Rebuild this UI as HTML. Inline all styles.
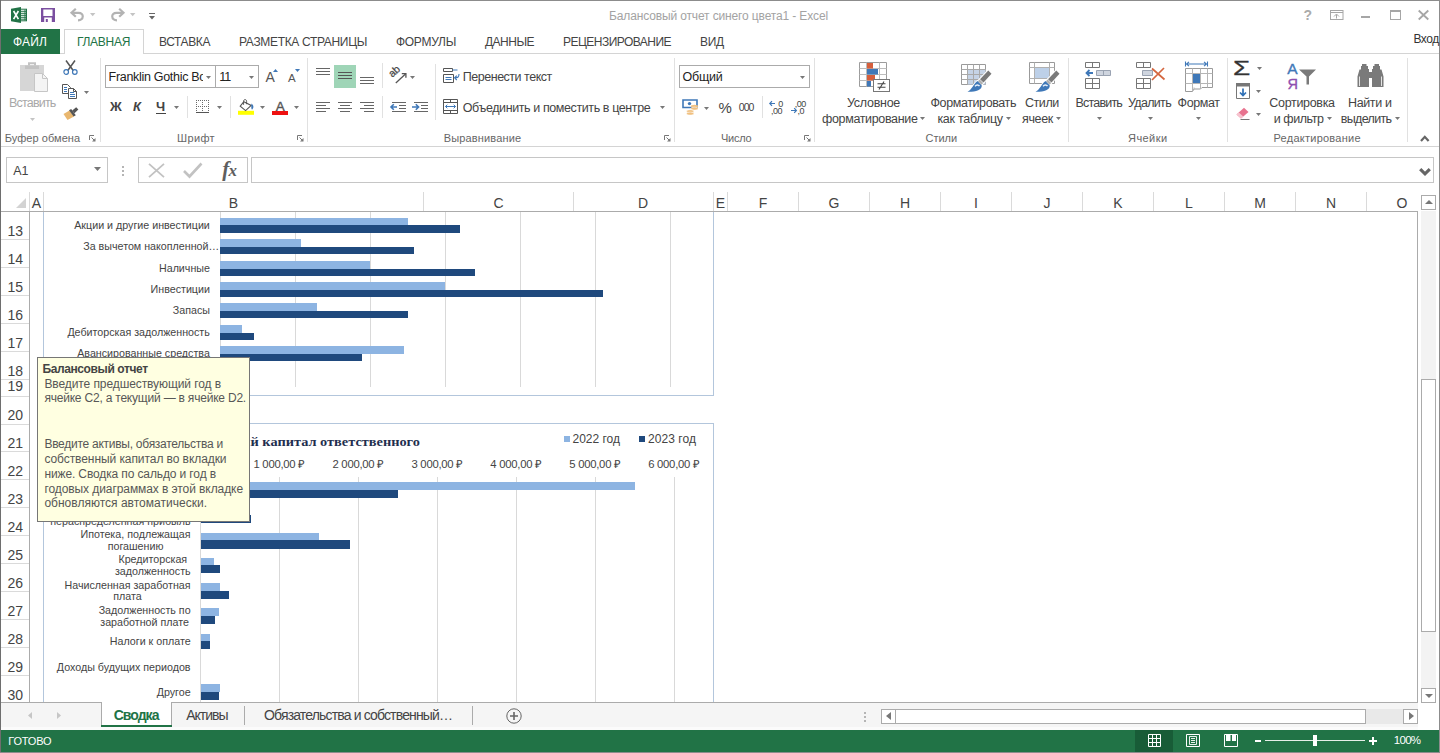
<!DOCTYPE html>
<html lang="ru"><head><meta charset="utf-8"><title>Excel</title>
<style>
*{box-sizing:border-box;margin:0;padding:0}
html,body{width:1440px;height:753px;overflow:hidden;background:#fff}
body{position:relative;font-family:"Liberation Sans",sans-serif;font-size:12px;color:#444}
.a{position:absolute;white-space:nowrap}
svg{position:absolute;overflow:visible}
</style></head><body>
<!-- window frame -->
<div class="a" style="left:0px;top:0px;width:1440px;height:1px;background:#8c8c8c;"></div>
<div class="a" style="left:0px;top:0px;width:1px;height:753px;background:#6e6e6e;"></div>
<div class="a" style="left:1439px;top:0px;width:1px;height:753px;background:#8c8c8c;"></div>
<div class="a" style="left:0px;top:752px;width:1440px;height:1px;background:#8c8c8c;"></div>
<!-- title bar -->
<div class="a" style="left:609.00px;top:7.94px;font-size:12px;line-height:16px;color:#a3a3a3;letter-spacing:-0.137px;">Балансовый отчет синего цвета1 - Excel</div>
<svg style="left:11px;top:7px" width="17" height="16" viewBox="0 0 17 16">
 <rect x="8.5" y="2.2" width="7" height="11.600" fill="#fff" stroke="#217346" stroke-width="1"/>
 <path d="M10 4.300h5M10 6.300h5M10 8.300h5M10 10.300h5M10 12.200h5M14 2.500v11" stroke="#217346" stroke-width="1" fill="none"/>
 <path d="M0 1.8 L10 0 V16 L0 14.2Z" fill="#217346"/>
 <path d="M2.600 4 L7.400 12.200 M7.400 4 L2.600 12.200" stroke="#fff" stroke-width="1.600" fill="none"/>
</svg>
<svg style="left:41px;top:8px" width="14" height="14" viewBox="0 0 14 14">
 <path d="M0 0H14V14H0Z" fill="#7b4fa0"/>
 <rect x="2.300" y="1.500" width="9.200" height="6.500" fill="#fff"/>
 <rect x="3.200" y="9.500" width="7.600" height="4.5" fill="#fff"/>
 <rect x="4.800" y="11" width="2" height="3" fill="#7b4fa0"/>
</svg>
<svg style="left:70px;top:8px" width="15" height="14" viewBox="0 0 15 14">
 <path d="M5.800 0.800 L1.500 4.800 L5.800 8.800" fill="none" stroke="#b3b3b3" stroke-width="2.200"/>
 <path d="M2 4.800 H8.500 C14.500 4.800 14 12.300 8 12.300" fill="none" stroke="#b3b3b3" stroke-width="2.200"/>
</svg>
<svg style="left:110px;top:8px" width="15" height="14" viewBox="0 0 15 14">
 <path d="M9.200 0.800 L13.500 4.800 L9.200 8.800" fill="none" stroke="#b3b3b3" stroke-width="2.200"/>
 <path d="M13 4.800 H6.500 C0.500 4.800 1 12.300 7 12.300" fill="none" stroke="#b3b3b3" stroke-width="2.200"/>
</svg>
<svg style="left:89.8px;top:12.8px" width="5.4" height="3.2"><path d="M0 0H5.4L2.7 3.2Z" fill="#c4c4c4"/></svg>
<svg style="left:129.6px;top:12.8px" width="5.4" height="3.2"><path d="M0 0H5.4L2.7 3.2Z" fill="#c4c4c4"/></svg>
<div class="a" style="left:148.5px;top:13px;width:6px;height:1px;background:#666;"></div>
<svg style="left:148.5px;top:16px" width="6" height="3.5"><path d="M0 0H6L3 3.5Z" fill="#666"/></svg>
<div class="a" style="left:1303.60px;top:6.15px;font-size:14px;line-height:18px;color:#ababab;font-weight:bold;">?</div>
<svg style="left:1330px;top:10px" width="14" height="10" viewBox="0 0 14 10">
 <rect x="0.5" y="0.5" width="12.500" height="9" fill="none" stroke="#a6a6a6"/>
 <path d="M0.5 2.5H13M6.500 8.500V4.5M4 6.5L6.500 4L9 6.5" fill="none" stroke="#a6a6a6"/>
</svg>
<svg style="left:1418px;top:10px" width="11" height="10" viewBox="0 0 11 10">
 <path d="M0.7 0.5L10.3 9.5M10.3 0.5L0.7 9.5" stroke="#a6a6a6" stroke-width="1.8" fill="none"/>
</svg>
<div class="a" style="left:1361px;top:16px;width:9px;height:2px;background:#a6a6a6;"></div>
<div class="a" style="left:1390px;top:10px;width:10.5px;height:10px;border:1px solid #a6a6a6;border-top-width:2px;"></div>
<!-- ribbon tabs -->
<div class="a" style="left:1px;top:53px;width:1438px;height:1px;background:#d4d4d4;"></div>
<div class="a" style="left:1px;top:29px;width:59px;height:25px;background:#217346;"></div>
<div class="a" style="left:64px;top:29px;width:80px;height:25px;background:#fff;border:1px solid #d4d4d4;border-bottom:none;"></div>
<div class="a" style="left:13.00px;top:33.74px;font-size:12px;line-height:16px;color:#fff;letter-spacing:0.159px;">ФАЙЛ</div>
<div class="a" style="left:77.00px;top:33.74px;font-size:12px;line-height:16px;color:#217346;letter-spacing:-0.292px;">ГЛАВНАЯ</div>
<div class="a" style="left:159.00px;top:33.74px;font-size:12px;line-height:16px;color:#444;letter-spacing:-0.401px;">ВСТАВКА</div>
<div class="a" style="left:239.00px;top:33.74px;font-size:12px;line-height:16px;color:#444;letter-spacing:-0.328px;">РАЗМЕТКА СТРАНИЦЫ</div>
<div class="a" style="left:396.00px;top:33.74px;font-size:12px;line-height:16px;color:#444;letter-spacing:-0.292px;">ФОРМУЛЫ</div>
<div class="a" style="left:485.00px;top:33.74px;font-size:12px;line-height:16px;color:#444;letter-spacing:-0.515px;">ДАННЫЕ</div>
<div class="a" style="left:563.00px;top:33.74px;font-size:12px;line-height:16px;color:#444;letter-spacing:-0.529px;">РЕЦЕНЗИРОВАНИЕ</div>
<div class="a" style="left:700.00px;top:33.74px;font-size:12px;line-height:16px;color:#444;letter-spacing:-0.252px;">ВИД</div>
<div class="a" style="left:1413.40px;top:30.64px;font-size:12px;line-height:16px;color:#333;letter-spacing:-0.412px;">Вход</div>
<!-- ribbon -->
<div class="a" style="left:1px;top:146px;width:1438px;height:1px;background:#d4d4d4;"></div>
<div class="a" style="left:100px;top:58px;width:1px;height:84px;background:#e1e1e1;"></div>
<div class="a" style="left:307px;top:58px;width:1px;height:84px;background:#e1e1e1;"></div>
<div class="a" style="left:674px;top:58px;width:1px;height:84px;background:#e1e1e1;"></div>
<div class="a" style="left:814px;top:58px;width:1px;height:84px;background:#e1e1e1;"></div>
<div class="a" style="left:1068px;top:58px;width:1px;height:84px;background:#e1e1e1;"></div>
<div class="a" style="left:1227px;top:58px;width:1px;height:84px;background:#e1e1e1;"></div>
<div class="a" style="left:1407px;top:58px;width:1px;height:84px;background:#e1e1e1;"></div>
<div class="a" style="left:4.70px;top:130.59px;font-size:11px;line-height:14px;color:#666;letter-spacing:0.063px;">Буфер обмена</div>
<div class="a" style="left:177.00px;top:130.59px;font-size:11px;line-height:14px;color:#666;letter-spacing:0.362px;">Шрифт</div>
<div class="a" style="left:443.70px;top:130.59px;font-size:11px;line-height:14px;color:#666;letter-spacing:0.157px;">Выравнивание</div>
<div class="a" style="left:721.00px;top:130.59px;font-size:11px;line-height:14px;color:#666;letter-spacing:-0.227px;">Число</div>
<div class="a" style="left:925.50px;top:130.59px;font-size:11px;line-height:14px;color:#666;letter-spacing:-0.038px;">Стили</div>
<div class="a" style="left:1128.00px;top:130.59px;font-size:11px;line-height:14px;color:#666;letter-spacing:0.434px;">Ячейки</div>
<div class="a" style="left:1273.50px;top:130.59px;font-size:11px;line-height:14px;color:#666;letter-spacing:0.250px;">Редактирование</div>
<svg style="left:89px;top:135px" width="7" height="7" viewBox="0 0 7 7"><path d="M0.5 5V0.5H5" fill="none" stroke="#777"/><path d="M2.5 2.5L5.5 5.5" stroke="#777" fill="none"/><path d="M6.5 3V6.5H3Z" fill="#777"/></svg>
<svg style="left:296.5px;top:135px" width="7" height="7" viewBox="0 0 7 7"><path d="M0.5 5V0.5H5" fill="none" stroke="#777"/><path d="M2.5 2.5L5.5 5.5" stroke="#777" fill="none"/><path d="M6.5 3V6.5H3Z" fill="#777"/></svg>
<svg style="left:663.5px;top:135px" width="7" height="7" viewBox="0 0 7 7"><path d="M0.5 5V0.5H5" fill="none" stroke="#777"/><path d="M2.5 2.5L5.5 5.5" stroke="#777" fill="none"/><path d="M6.5 3V6.5H3Z" fill="#777"/></svg>
<svg style="left:803.5px;top:135px" width="7" height="7" viewBox="0 0 7 7"><path d="M0.5 5V0.5H5" fill="none" stroke="#777"/><path d="M2.5 2.5L5.5 5.5" stroke="#777" fill="none"/><path d="M6.5 3V6.5H3Z" fill="#777"/></svg>
<svg style="left:1419.500px;top:134.500px" width="10" height="7" viewBox="0 0 10 7"><path d="M1 6L4.800 1.800L8.600 6" fill="none" stroke="#666" stroke-width="2.200"/></svg>
<svg style="left:20px;top:62px" width="28" height="30" viewBox="0 0 28 30">
 <path d="M0 3H24V29H0Z" fill="#d6d6d6"/>
 <path d="M5 3.5 H19 V7 H5Z" fill="#c3c3c3"/>
 <path d="M9 3.5 V1.2 H15 V3.5" fill="none" stroke="#c3c3c3" stroke-width="2"/>
 <path d="M14.5 11.5 H22.5 L27.5 16.5 V29.5 H14.5Z" fill="#f4f4f4" stroke="#c6c6c6"/>
 <path d="M22.5 11.5 V16.5 H27.5" fill="none" stroke="#c6c6c6"/>
</svg>
<div class="a" style="left:9.00px;top:95.27px;font-size:12.5px;line-height:16px;color:#a8a8a8;letter-spacing:-0.811px;">Вставить</div>
<svg style="left:30.3px;top:117.6px" width="5" height="3"><path d="M0 0H5L2.5 3Z" fill="#c4c4c4"/></svg>
<svg style="left:63px;top:60px" width="15" height="15" viewBox="0 0 15 15">
 <path d="M3 0.5 L10.2 10.5 M12 0.5 L4.8 10.5" stroke="#555" stroke-width="1.5" fill="none"/>
 <circle cx="3.2" cy="12" r="2.3" fill="none" stroke="#3f78b8" stroke-width="1.2"/>
 <circle cx="11.8" cy="12" r="2.3" fill="none" stroke="#3f78b8" stroke-width="1.2"/>
</svg>
<svg style="left:62px;top:84px" width="16" height="15" viewBox="0 0 16 15">
 <path d="M0.5 0.5 H5.5 L8.5 3.5 V9.5 H0.5Z" fill="#fff" stroke="#555"/>
 <path d="M2 3.5H5M2 5.5H5M2 7.5H5" stroke="#3f78b8" fill="none"/>
 <path d="M6.5 4.5 H11.5 L14.5 7.5 V14.5 H6.5Z" fill="#fff" stroke="#555"/>
 <path d="M11.5 4.5V7.5H14.5" fill="none" stroke="#555"/>
 <path d="M8 8.5H12M8 10.5H13M8 12.5H13" stroke="#3f78b8" fill="none"/>
</svg>
<svg style="left:84px;top:90.5px" width="5" height="3"><path d="M0 0H5L2.5 3Z" fill="#777"/></svg>
<svg style="left:63px;top:106px" width="16" height="15" viewBox="0 0 16 15">
 <path d="M0.5 8 L6.5 4.5 L11 10.5 L4.5 14 Z" fill="#e9b76f"/>
 <path d="M6 4.3 L8.2 3 L12.8 9.2 L10.6 10.6Z" fill="#555"/>
 <path d="M9.2 4.6 L13.2 1.2 L15.4 3.6 L11.4 7.2Z" fill="#555"/>
</svg>
<div class="a" style="left:105px;top:65px;width:111px;height:23px;background:#fff;border:1px solid #ababab;"></div>
<div class="a" style="left:215px;top:65px;width:44px;height:23px;background:#fff;border:1px solid #ababab;"></div>
<div class="a" style="left:108.60px;top:68.57px;font-size:12.5px;line-height:16px;color:#222;letter-spacing:-0.303px;width:94.3px;overflow:hidden;">Franklin Gothic Bo</div>
<svg style="left:206px;top:75.5px" width="5" height="3"><path d="M0 0H5L2.5 3Z" fill="#777"/></svg>
<div class="a" style="left:219.20px;top:68.57px;font-size:12.5px;line-height:16px;color:#222;letter-spacing:-0.988px;">11</div>
<svg style="left:249px;top:75.5px" width="5" height="3"><path d="M0 0H5L2.5 3Z" fill="#777"/></svg>
<div class="a" style="left:265.50px;top:68.35px;font-size:14px;line-height:18px;color:#555;">A</div>
<div class="a" style="left:288.00px;top:70.72px;font-size:11.5px;line-height:15px;color:#555;">A</div>
<svg style="left:273px;top:69px" width="5" height="3"><path d="M0 3H5L2.5 0Z" fill="#3f78b8"/></svg>
<svg style="left:295px;top:69px" width="5" height="3"><path d="M0 0H5L2.5 3Z" fill="#3f78b8"/></svg>
<div class="a" style="left:110.00px;top:98.20px;font-size:13px;line-height:17px;color:#444;font-weight:bold;">Ж</div>
<div class="a" style="left:133.00px;top:98.20px;font-size:13px;line-height:17px;color:#444;font-weight:bold;font-style:italic;">К</div>
<div class="a" style="left:156.00px;top:98.20px;font-size:13px;line-height:17px;color:#444;font-weight:bold;">Ч</div>
<div class="a" style="left:155.5px;top:112.5px;width:10px;height:1px;background:#444;"></div>
<svg style="left:173.8px;top:105.8px" width="5" height="3"><path d="M0 0H5L2.5 3Z" fill="#777"/></svg>
<div class="a" style="left:187px;top:96px;width:1px;height:22px;background:#e1e1e1;"></div>
<div class="a" style="left:230px;top:96px;width:1px;height:22px;background:#e1e1e1;"></div>
<svg style="left:196px;top:100px" width="13" height="13" viewBox="0 0 13 13" shape-rendering="crispEdges">
 <path d="M0 0h1v1h-1zM0 2h1v1h-1zM0 4h1v1h-1zM0 6h1v1h-1zM0 8h1v1h-1zM0 10h1v1h-1zM2 0h1v1h-1zM2 6h1v1h-1zM4 0h1v1h-1zM4 6h1v1h-1zM6 0h1v1h-1zM6 2h1v1h-1zM6 4h1v1h-1zM6 6h1v1h-1zM6 8h1v1h-1zM6 10h1v1h-1zM8 0h1v1h-1zM8 6h1v1h-1zM10 0h1v1h-1zM10 6h1v1h-1zM12 0h1v1h-1zM12 2h1v1h-1zM12 4h1v1h-1zM12 6h1v1h-1zM12 8h1v1h-1zM12 10h1v1h-1z" fill="#6a6a6a"/>
 <path d="M0 12h13v1h-13z" fill="#555"/>
</svg>
<svg style="left:217px;top:105.8px" width="5" height="3"><path d="M0 0H5L2.5 3Z" fill="#777"/></svg>
<svg style="left:238px;top:99px" width="16" height="16" viewBox="0 0 16 16">
 <rect x="0" y="11.800" width="16" height="4" fill="#ffff00"/>
 <path d="M5.800 2.800 L13.200 6.500 L7.600 11.600 L2.200 7.200Z" fill="#fff" stroke="#555" stroke-width="1.100"/>
 <path d="M5.600 5.800 V2.300 C5.600 0 8.600 0 8.600 2.300 V5.200" fill="none" stroke="#555" stroke-width="1"/>
 <path d="M13.400 4.600 C16 6.500 16 9 14 10.800 C12.800 9.200 13.400 7 13.400 4.600Z" fill="#3f78b8"/>
</svg>
<svg style="left:260px;top:105.8px" width="5" height="3"><path d="M0 0H5L2.5 3Z" fill="#777"/></svg>
<div class="a" style="left:275.80px;top:97.92px;font-size:13.5px;line-height:18px;color:#555;-webkit-text-stroke:0.35px #555;">A</div>
<div class="a" style="left:272px;top:111px;width:16px;height:4px;background:#ee1111;"></div>
<svg style="left:293.8px;top:105.8px" width="5" height="3"><path d="M0 0H5L2.5 3Z" fill="#777"/></svg>
<div class="a" style="left:316px;top:68px;width:14px;height:1px;background:#666;"></div>
<div class="a" style="left:316px;top:71px;width:14px;height:1px;background:#666;"></div>
<div class="a" style="left:316px;top:74px;width:14px;height:1px;background:#666;"></div>
<div class="a" style="left:334px;top:65px;width:22px;height:23px;background:#9fd5b7;"></div>
<div class="a" style="left:338px;top:72px;width:14px;height:1px;background:#555;"></div>
<div class="a" style="left:338px;top:75px;width:14px;height:1px;background:#555;"></div>
<div class="a" style="left:338px;top:78px;width:14px;height:1px;background:#555;"></div>
<div class="a" style="left:360px;top:77px;width:14px;height:1px;background:#666;"></div>
<div class="a" style="left:360px;top:80px;width:14px;height:1px;background:#666;"></div>
<div class="a" style="left:360px;top:83px;width:14px;height:1px;background:#666;"></div>
<div class="a" style="left:316px;top:102px;width:14px;height:1px;background:#666;"></div>
<div class="a" style="left:338px;top:102px;width:14px;height:1px;background:#666;"></div>
<div class="a" style="left:360px;top:102px;width:14px;height:1px;background:#666;"></div>
<div class="a" style="left:316px;top:105px;width:10px;height:1px;background:#666;"></div>
<div class="a" style="left:340px;top:105px;width:10px;height:1px;background:#666;"></div>
<div class="a" style="left:364px;top:105px;width:10px;height:1px;background:#666;"></div>
<div class="a" style="left:316px;top:108px;width:14px;height:1px;background:#666;"></div>
<div class="a" style="left:338px;top:108px;width:14px;height:1px;background:#666;"></div>
<div class="a" style="left:360px;top:108px;width:14px;height:1px;background:#666;"></div>
<div class="a" style="left:316px;top:111px;width:10px;height:1px;background:#666;"></div>
<div class="a" style="left:340px;top:111px;width:10px;height:1px;background:#666;"></div>
<div class="a" style="left:364px;top:111px;width:10px;height:1px;background:#666;"></div>
<div class="a" style="left:382px;top:63px;width:1px;height:25px;background:#e1e1e1;"></div>
<div class="a" style="left:382px;top:96px;width:1px;height:22px;background:#e1e1e1;"></div>
<div class="a" style="left:435px;top:64px;width:1px;height:56px;background:#e1e1e1;"></div>
<svg style="left:389px;top:66px" width="19" height="19" viewBox="0 0 19 19">
 <text x="0" y="0" transform="translate(3.200,11.800) rotate(-42)" font-family="Liberation Sans, sans-serif" font-size="10.500" fill="#4a4a4a" stroke="#4a4a4a" stroke-width=".25">ab</text>
 <path d="M6.800 17 L16.500 8" stroke="#555" stroke-width="1.300" fill="none"/>
 <path d="M12.800 7.600 H16.900 V11.700" stroke="#555" stroke-width="1.300" fill="none"/>
</svg>
<svg style="left:410px;top:76px" width="5" height="3"><path d="M0 0H5L2.5 3Z" fill="#777"/></svg>
<svg style="left:390px;top:101px" width="17" height="12" viewBox="0 0 17 12"><path d="M2 1.5H16M9 4.5H16M9 7.5H16M2 10.5H16" stroke="#666" fill="none"/><path d="M1 6H7M3.8 3.2L1 6L3.8 8.8" stroke="#3f78b8" stroke-width="1.6" fill="none"/></svg>
<svg style="left:412px;top:101px" width="17" height="12" viewBox="0 0 17 12"><path d="M2 1.5H16M9 4.5H16M9 7.5H16M2 10.5H16" stroke="#666" fill="none"/><path d="M0 6H6M3.8 3.2L6.6 6L3.8 8.8" stroke="#3f78b8" stroke-width="1.6" fill="none"/></svg>
<svg style="left:443px;top:68px" width="17" height="15" viewBox="0 0 17 15">
 <path d="M0.5 0.5H9.500V3.5H0.5Z" fill="#fff" stroke="#555"/>
 <path d="M9.500 2H14.500" stroke="#3f78b8" fill="none"/>
 <path d="M0.5 6.5H10.500V14.5H0.5Z" fill="#fff" stroke="#555"/>
 <path d="M2.500 9.5H8.500M2.500 11.5H8.500" stroke="#3f78b8" fill="none"/>
 <path d="M16 6C16 9.500 14.500 9.800 11.800 9.800M13.800 7.600L11.600 9.800L13.800 12" stroke="#3f78b8" stroke-width="1.1" fill="none"/>
</svg>
<div class="a" style="left:462.80px;top:68.67px;font-size:12.5px;line-height:16px;color:#444;letter-spacing:-0.483px;">Перенести текст</div>
<svg style="left:443px;top:99px" width="16" height="15" viewBox="0 0 16 15">
 <path d="M0.5 0.5H14.5V14.5H0.5Z" fill="#fff" stroke="#555"/>
 <path d="M0.5 3.5H14.5M0.5 11.5H14.5M7.5 0.5V3.5M7.5 11.5V14.5" stroke="#555" fill="none"/>
 <path d="M2.5 7.5H12.5M4.3 5.7L2.5 7.5L4.3 9.3M10.7 5.7L12.5 7.5L10.7 9.3" stroke="#3f78b8" fill="none"/>
</svg>
<div class="a" style="left:462.80px;top:99.87px;font-size:12.5px;line-height:16px;color:#444;letter-spacing:-0.398px;">Объединить и поместить в центре</div>
<svg style="left:660px;top:106px" width="5" height="3"><path d="M0 0H5L2.5 3Z" fill="#777"/></svg>
<div class="a" style="left:679px;top:65px;width:131px;height:23px;background:#fff;border:1px solid #ababab;"></div>
<div class="a" style="left:682.60px;top:69.17px;font-size:12.5px;line-height:16px;color:#222;letter-spacing:-0.226px;">Общий</div>
<svg style="left:800px;top:75.5px" width="5" height="3"><path d="M0 0H5L2.5 3Z" fill="#777"/></svg>
<svg style="left:682px;top:99px" width="17" height="17" viewBox="0 0 17 17">
 <path d="M1 1H15V8.5H1Z" fill="#fff" stroke="#3f78b8" stroke-width="1.6"/>
 <circle cx="7.5" cy="4.6" r="1.7" fill="#3f78b8"/>
 <ellipse cx="12.5" cy="7.2" rx="3.6" ry="1.5" fill="#f0c080"/>
 <ellipse cx="12.5" cy="9.6" rx="3.6" ry="1.5" fill="#f0c080" stroke="#fff" stroke-width=".5"/>
 <ellipse cx="8.2" cy="12.2" rx="3.6" ry="1.5" fill="#f0c080" stroke="#fff" stroke-width=".5"/>
 <ellipse cx="8.2" cy="14.6" rx="3.6" ry="1.5" fill="#f0c080" stroke="#fff" stroke-width=".5"/>
</svg>
<svg style="left:704px;top:106.5px" width="5" height="3"><path d="M0 0H5L2.5 3Z" fill="#777"/></svg>
<div class="a" style="left:718.50px;top:98.00px;font-size:15px;line-height:20px;color:#444;">%</div>
<div class="a" style="left:738.80px;top:99.86px;font-size:10.5px;line-height:14px;color:#444;letter-spacing:-1.006px;">000</div>
<div class="a" style="left:762px;top:96px;width:1px;height:22px;background:#e1e1e1;"></div>
<svg style="left:769px;top:100px" width="15" height="15" viewBox="0 0 15 15">
 <path d="M0.8 3.5H6M3 1.2L0.8 3.5L3 5.8" stroke="#3f78b8" stroke-width="1.2" fill="none"/>
 <text x="9.300" y="6.800" font-family="Liberation Sans, sans-serif" font-size="9" fill="#444">0</text>
 <text x="2" y="14" font-family="Liberation Sans, sans-serif" font-size="9" fill="#444" letter-spacing="-0.500">,00</text>
</svg>
<svg style="left:791px;top:100px" width="15" height="15" viewBox="0 0 15 15">
 <text x="3.800" y="6.800" font-family="Liberation Sans, sans-serif" font-size="9" fill="#444" letter-spacing="-0.500">,00</text>
 <path d="M0 10.5H5.4M3.2 8.2L5.4 10.5L3.2 12.8" stroke="#3f78b8" stroke-width="1.2" fill="none"/>
 <text x="6.600" y="14" font-family="Liberation Sans, sans-serif" font-size="9" fill="#444" letter-spacing="-0.500">,0</text>
</svg>
<svg style="left:859px;top:62px" width="31" height="30" viewBox="0 0 31 30">
 <path d="M0.5 0.5H27.5V24.5H0.5Z" fill="#fff" stroke="#9c9c9c"/>
 <path d="M0.5 6.5H27.5M0.5 12.5H27.5M0.5 18.5H27.5M7.5 0.5V24.5M20.5 0.5V24.5" stroke="#bdbdbd" fill="none"/>
 <rect x="8" y="1" width="6" height="5.5" fill="#d65f3c"/>
 <rect x="8" y="7" width="11" height="5.5" fill="#3f78b8"/>
 <rect x="8" y="13" width="8" height="5.5" fill="#d65f3c"/>
 <rect x="8" y="19" width="4" height="5.5" fill="#3f78b8"/>
 <rect x="14.5" y="17.500" width="16" height="12" fill="#fff" stroke="#777"/>
 <path d="M18.5 21.8H26.5M18.5 25.2H26.5M25 19.5L20 27.5" stroke="#444" stroke-width="1.1" fill="none"/>
</svg>
<div class="a" style="left:847.00px;top:94.67px;font-size:12.5px;line-height:16px;color:#444;letter-spacing:-0.274px;">Условное</div>
<div class="a" style="left:822.00px;top:110.57px;font-size:12.5px;line-height:16px;color:#444;letter-spacing:-0.347px;">форматирование</div>
<svg style="left:919.7px;top:117px" width="5" height="3"><path d="M0 0H5L2.5 3Z" fill="#777"/></svg>
<svg style="left:961px;top:64px" width="31" height="28" viewBox="0 0 31 28">
 <path d="M0.5 0.5H24.5V20.500H0.5Z" fill="#fff" stroke="#9a9a9a"/>
 <rect x="6.5" y="5.5" width="18" height="15" fill="#c5d3e6"/>
 <path d="M0.5 5.5H24.5M0.5 10.5H24.5M0.5 15.5H24.5M6.5 0.5V20.500M12.5 0.5V20.500M18.5 0.5V20.500" stroke="#a9a9a9" fill="none"/>
 <g transform="translate(5.5,7)">
 <g stroke="#fff" stroke-width="2" stroke-linejoin="round"><path d="M21.800 -0.500 L25 2.700 L17 11.500 L13.500 8.200Z" fill="#7a7a7a"/>
 <path d="M13.200 8.500 L16.700 12 L15 13.800 L11.400 10.200Z" fill="#b0b0b0"/>
 <path d="M11 10 L15.200 14.200 C16 18.800 9 21 1 20.800 C6 18 6.500 13.500 11 10Z" fill="#3f78b8"/></g>
 <path d="M21.800 -0.500 L25 2.700 L17 11.500 L13.500 8.200Z" fill="#7a7a7a"/>
 <path d="M13.200 8.500 L16.700 12 L15 13.800 L11.400 10.200Z" fill="#b0b0b0"/>
 <path d="M11 10 L15.200 14.200 C16 18.800 9 21 1 20.800 C6 18 6.500 13.500 11 10Z" fill="#3f78b8"/>
 <path d="M8.600 15.400 C9.600 13.600 12 13.600 13 15.200" stroke="#e8f0fa" stroke-width="1.500" fill="none"/>
</g>
</svg>
<div class="a" style="left:930.50px;top:94.67px;font-size:12.5px;line-height:16px;color:#444;letter-spacing:-0.400px;">Форматировать</div>
<div class="a" style="left:937.40px;top:110.57px;font-size:12.5px;line-height:16px;color:#444;letter-spacing:-0.278px;">как таблицу</div>
<svg style="left:1006px;top:117px" width="5" height="3"><path d="M0 0H5L2.5 3Z" fill="#777"/></svg>
<svg style="left:1029px;top:62px" width="31" height="30" viewBox="0 0 31 30">
 <path d="M0.5 0.5H25.500V21.5H0.5Z" fill="#fff" stroke="#9a9a9a"/>
 <path d="M0.5 5.5H25.500M0.5 16.5H25.500M5.5 0.5V21.5M20.500 0.5V21.5" stroke="#b0b0b0" fill="none"/>
 <rect x="6" y="6" width="14" height="10" fill="#bdd0e8"/>
 <g transform="translate(5.5,9)">
 <g stroke="#fff" stroke-width="2" stroke-linejoin="round"><path d="M21.800 -0.500 L25 2.700 L17 11.500 L13.500 8.200Z" fill="#7a7a7a"/>
 <path d="M13.200 8.500 L16.700 12 L15 13.800 L11.400 10.200Z" fill="#b0b0b0"/>
 <path d="M11 10 L15.200 14.200 C16 18.800 9 21 1 20.800 C6 18 6.500 13.500 11 10Z" fill="#3f78b8"/></g>
 <path d="M21.800 -0.500 L25 2.700 L17 11.500 L13.500 8.200Z" fill="#7a7a7a"/>
 <path d="M13.200 8.500 L16.700 12 L15 13.800 L11.400 10.200Z" fill="#b0b0b0"/>
 <path d="M11 10 L15.200 14.200 C16 18.800 9 21 1 20.800 C6 18 6.500 13.500 11 10Z" fill="#3f78b8"/>
 <path d="M8.600 15.400 C9.600 13.600 12 13.600 13 15.200" stroke="#e8f0fa" stroke-width="1.500" fill="none"/>
</g>
</svg>
<div class="a" style="left:1025.00px;top:94.67px;font-size:12.5px;line-height:16px;color:#444;letter-spacing:-0.442px;">Стили</div>
<div class="a" style="left:1022.00px;top:110.57px;font-size:12.5px;line-height:16px;color:#444;letter-spacing:-0.331px;">ячеек</div>
<svg style="left:1056px;top:117px" width="5" height="3"><path d="M0 0H5L2.5 3Z" fill="#777"/></svg>
<svg style="left:1085px;top:62px" width="28" height="27" viewBox="0 0 28 27">
 <path d="M0.5 0.5H14.5V5.5H0.5ZM7.5 0.5V5.5" fill="#fff" stroke="#777"/>
 <path d="M11.5 8.5H25.500V13.5H11.5Z" fill="#cfd5df" stroke="#9aa3b2"/><path d="M18.5 8.5V13.5" stroke="#9aa3b2"/>
 <path d="M0.5 16.5H14.5V26.500H0.5ZM7.5 16.5V26.500M0.5 21.5H14.5" fill="#fff" stroke="#777"/>
 <path d="M1.5 11H8M4.5 8L1.5 11L4.500 14" stroke="#3f78b8" stroke-width="1.8" fill="none"/>
</svg>
<div class="a" style="left:1075.60px;top:95.07px;font-size:12.5px;line-height:16px;color:#444;letter-spacing:-0.823px;">Вставить</div>
<svg style="left:1097px;top:117px" width="5" height="3"><path d="M0 0H5L2.5 3Z" fill="#777"/></svg>
<svg style="left:1136px;top:62px" width="30" height="27" viewBox="0 0 30 27">
 <path d="M0.5 0.5H14.5V5.5H0.5ZM7.5 0.5V5.5" fill="#fff" stroke="#777"/>
 <path d="M6.5 8.5H16.5V13.5H6.5Z" fill="#cfd5df" stroke="#9aa3b2"/>
 <path d="M0.5 16.5H14.5V26.500H0.5ZM7.5 16.5V26.500M0.5 21.5H14.5" fill="#fff" stroke="#777"/>
 <path d="M16 6.500L28.5 17.500M28 6L16 18" stroke="#d4663f" stroke-width="1.7" fill="none"/>
</svg>
<div class="a" style="left:1128.00px;top:95.07px;font-size:12.5px;line-height:16px;color:#444;letter-spacing:-0.675px;">Удалить</div>
<svg style="left:1148px;top:117px" width="5" height="3"><path d="M0 0H5L2.5 3Z" fill="#777"/></svg>
<svg style="left:1185px;top:61px" width="28" height="31" viewBox="0 0 28 31">
 <path d="M0.5 0.5V5.500M22.5 0.5V5.500M1.5 3H21.5M4 0.8L1.5 3L4 5.200M19 0.8L21.5 3L19 5.200" stroke="#3f78b8" stroke-width="1.1" fill="none"/>
 <path d="M0.5 7.5H27.500V26.500H17L15.500 28H9L7.500 30.500H0.5Z" fill="#fff" stroke="#9a9a9a"/>
 <path d="M0.5 12.500H27.500M0.5 22.500H27.500M7.5 7.5V30M15.500 7.5V28M22.500 7.5V26.500M9 28V26.500" stroke="#b5b5b5" fill="none"/>
 <rect x="8" y="13" width="7" height="9" fill="#3f78b8"/>
</svg>
<div class="a" style="left:1177.50px;top:95.07px;font-size:12.5px;line-height:16px;color:#444;letter-spacing:-0.367px;">Формат</div>
<svg style="left:1196px;top:117px" width="5" height="3"><path d="M0 0H5L2.5 3Z" fill="#777"/></svg>
<div class="a" style="left:1233.40px;top:54.40px;font-size:20.5px;line-height:27px;color:#333;transform:scaleX(1.36);transform-origin:0 0;-webkit-text-stroke:0.3px #333;">Σ</div>
<svg style="left:1256.8px;top:67px" width="5" height="3"><path d="M0 0H5L2.5 3Z" fill="#777"/></svg>
<svg style="left:1236px;top:83px" width="14" height="16" viewBox="0 0 14 16">
 <path d="M0.5 0.5H13.5V15.500H0.5Z" fill="#fff" stroke="#777"/>
 <rect x="0" y="0" width="14" height="3.500" fill="#777"/>
 <path d="M7 5.500V12.500M4 9.500L7 12.500L10 9.500" stroke="#2e6fb5" stroke-width="1.7" fill="none"/>
</svg>
<svg style="left:1255.5px;top:90px" width="5" height="3"><path d="M0 0H5L2.5 3Z" fill="#777"/></svg>
<svg style="left:1236px;top:107px" width="14" height="13" viewBox="0 0 14 13">
 <path d="M0.5 7.500L8 0.8L12.500 5L5 11.500Z" fill="#e8738f"/>
 <path d="M0.5 7.500L2.800 5.500L7.300 9.600L5 11.500Z" fill="#f6c4cf"/>
 <path d="M4.500 12.500H13.500" stroke="#777" fill="none"/>
</svg>
<svg style="left:1255.5px;top:112.8px" width="5" height="3"><path d="M0 0H5L2.5 3Z" fill="#777"/></svg>
<svg style="left:1287px;top:62px" width="30" height="28" viewBox="0 0 30 28">
 <text x="0.200" y="12.200" font-family="Liberation Sans, sans-serif" font-size="15.500" fill="#3f78b8" stroke="#3f78b8" stroke-width=".35">A</text>
 <text x="0.5" y="26.500" font-family="Liberation Sans, sans-serif" font-size="14.500" fill="#8e4fb0" stroke="#8e4fb0" stroke-width=".35">Я</text>
 <path d="M12 7.500H29L22 14.500V22.500H19.500V14.500Z" fill="#7a7a7a"/>
</svg>
<div class="a" style="left:1269.30px;top:94.67px;font-size:12.5px;line-height:16px;color:#444;letter-spacing:-0.320px;">Сортировка</div>
<div class="a" style="left:1273.80px;top:110.67px;font-size:12.5px;line-height:16px;color:#444;letter-spacing:-0.441px;">и фильтр</div>
<svg style="left:1327px;top:117px" width="5" height="3"><path d="M0 0H5L2.5 3Z" fill="#777"/></svg>
<svg style="left:1357px;top:64px" width="27" height="24" viewBox="0 0 27 24">
 <path d="M5 0H9.500V2H11V5H12V23H0.5V12.500L2.500 5.500H4V2H5Z" fill="#7a7a7a"/>
 <path d="M22 0H17.500V2H16V5H15V23H26.500V12.500L24.500 5.500H23V2H22Z" fill="#7a7a7a"/>
 <rect x="11" y="8" width="5" height="6" fill="#7a7a7a"/>
 <path d="M2.500 12.500V22M24.500 12.500V22" stroke="#fff" stroke-width=".8" fill="none"/>
</svg>
<div class="a" style="left:1348.00px;top:94.67px;font-size:12.5px;line-height:16px;color:#444;letter-spacing:-0.375px;">Найти и</div>
<div class="a" style="left:1340.70px;top:110.67px;font-size:12.5px;line-height:16px;color:#444;letter-spacing:-0.646px;">выделить</div>
<svg style="left:1395px;top:117px" width="5" height="3"><path d="M0 0H5L2.5 3Z" fill="#777"/></svg>
<!-- formula bar -->
<div class="a" style="left:6px;top:157px;width:102px;height:26px;background:#fff;border:1px solid #c6c6c6;"></div>
<div class="a" style="left:13.20px;top:162.87px;font-size:12.5px;line-height:16px;color:#444;letter-spacing:0.005px;">A1</div>
<svg style="left:94px;top:167px" width="7" height="4"><path d="M0 0H7L3.5 4Z" fill="#777"/></svg>
<div class="a" style="left:122px;top:165.5px;width:2px;height:2px;background:#b5b5b5;"></div>
<div class="a" style="left:122px;top:169.5px;width:2px;height:2px;background:#b5b5b5;"></div>
<div class="a" style="left:122px;top:173.5px;width:2px;height:2px;background:#b5b5b5;"></div>
<div class="a" style="left:138px;top:157px;width:110px;height:26px;background:#fff;border:1px solid #c6c6c6;"></div>
<svg style="left:148px;top:163px" width="17" height="15" viewBox="0 0 17 15"><path d="M1 0.8L16 14.200M16 0.8L1 14.200" stroke="#c2c2c2" stroke-width="1.8" fill="none"/></svg>
<svg style="left:183px;top:162px" width="20" height="16" viewBox="0 0 20 16"><path d="M1 9L6.500 14.500L18.500 1.500" stroke="#c2c2c2" stroke-width="2.6" fill="none"/></svg>
<div class="a" style="left:222.30px;top:156.31px;font-size:21px;line-height:27px;color:#5e5e5e;font-weight:bold;font-style:italic;font-family:'Liberation Serif',serif;">f</div>
<div class="a" style="left:228.60px;top:160.46px;font-size:17px;line-height:22px;color:#5e5e5e;font-weight:bold;font-style:italic;font-family:'Liberation Serif',serif;">x</div>
<div class="a" style="left:251px;top:157px;width:1183px;height:26px;background:#fff;border:1px solid #c6c6c6;"></div>
<svg style="left:1419px;top:167px" width="12" height="9" viewBox="0 0 12 9"><path d="M1.200 2.200L6 6.800L10.800 2.200" stroke="#666" stroke-width="3.200" fill="none"/></svg>
<!-- grid -->
<div class="a" style="left:1px;top:211px;width:1417px;height:1px;background:#ababab;"></div>
<div class="a" style="left:29px;top:212px;width:1px;height:490px;background:#ababab;"></div>
<div class="a" style="left:1417px;top:211px;width:1px;height:492px;background:#ababab;"></div>
<div class="a" style="left:1px;top:702px;width:1417px;height:1px;background:#ababab;"></div>
<svg style="left:16px;top:198px" width="10" height="10"><path d="M10 0V10H0Z" fill="#d3d3d3"/></svg>
<div class="a" style="left:29px;top:192px;width:1px;height:19px;background:#dadada;"></div>
<div class="a" style="left:43px;top:192px;width:1px;height:19px;background:#dadada;"></div>
<div class="a" style="left:423px;top:192px;width:1px;height:19px;background:#dadada;"></div>
<div class="a" style="left:573px;top:192px;width:1px;height:19px;background:#dadada;"></div>
<div class="a" style="left:713px;top:192px;width:1px;height:19px;background:#dadada;"></div>
<div class="a" style="left:727px;top:192px;width:1px;height:19px;background:#dadada;"></div>
<div class="a" style="left:798px;top:192px;width:1px;height:19px;background:#dadada;"></div>
<div class="a" style="left:869px;top:192px;width:1px;height:19px;background:#dadada;"></div>
<div class="a" style="left:940px;top:192px;width:1px;height:19px;background:#dadada;"></div>
<div class="a" style="left:1011px;top:192px;width:1px;height:19px;background:#dadada;"></div>
<div class="a" style="left:1082px;top:192px;width:1px;height:19px;background:#dadada;"></div>
<div class="a" style="left:1153px;top:192px;width:1px;height:19px;background:#dadada;"></div>
<div class="a" style="left:1224px;top:192px;width:1px;height:19px;background:#dadada;"></div>
<div class="a" style="left:1295px;top:192px;width:1px;height:19px;background:#dadada;"></div>
<div class="a" style="left:1366px;top:192px;width:1px;height:19px;background:#dadada;"></div>
<div class="a" style="left:31.83px;top:193.85px;font-size:14px;line-height:18px;color:#444;">A</div>
<div class="a" style="left:228.83px;top:193.85px;font-size:14px;line-height:18px;color:#444;">B</div>
<div class="a" style="left:493.44px;top:193.85px;font-size:14px;line-height:18px;color:#444;">C</div>
<div class="a" style="left:637.94px;top:193.85px;font-size:14px;line-height:18px;color:#444;">D</div>
<div class="a" style="left:715.83px;top:193.85px;font-size:14px;line-height:18px;color:#444;">E</div>
<div class="a" style="left:758.72px;top:193.85px;font-size:14px;line-height:18px;color:#444;">F</div>
<div class="a" style="left:828.56px;top:193.85px;font-size:14px;line-height:18px;color:#444;">G</div>
<div class="a" style="left:899.94px;top:193.85px;font-size:14px;line-height:18px;color:#444;">H</div>
<div class="a" style="left:974.06px;top:193.85px;font-size:14px;line-height:18px;color:#444;">I</div>
<div class="a" style="left:1043.50px;top:193.85px;font-size:14px;line-height:18px;color:#444;">J</div>
<div class="a" style="left:1113.33px;top:193.85px;font-size:14px;line-height:18px;color:#444;">K</div>
<div class="a" style="left:1185.11px;top:193.85px;font-size:14px;line-height:18px;color:#444;">L</div>
<div class="a" style="left:1254.17px;top:193.85px;font-size:14px;line-height:18px;color:#444;">M</div>
<div class="a" style="left:1325.94px;top:193.85px;font-size:14px;line-height:18px;color:#444;">N</div>
<div class="a" style="left:1396.56px;top:193.85px;font-size:14px;line-height:18px;color:#444;">O</div>
<div class="a" style="left:1px;top:239px;width:28px;height:1px;background:#dadada;"></div>
<div class="a" style="left:7.51px;top:221.95px;font-size:14px;line-height:18px;color:#444;">13</div>
<div class="a" style="left:1px;top:267px;width:28px;height:1px;background:#dadada;"></div>
<div class="a" style="left:7.51px;top:249.85px;font-size:14px;line-height:18px;color:#444;">14</div>
<div class="a" style="left:1px;top:295px;width:28px;height:1px;background:#dadada;"></div>
<div class="a" style="left:7.51px;top:277.75px;font-size:14px;line-height:18px;color:#444;">15</div>
<div class="a" style="left:1px;top:323px;width:28px;height:1px;background:#dadada;"></div>
<div class="a" style="left:7.51px;top:305.65px;font-size:14px;line-height:18px;color:#444;">16</div>
<div class="a" style="left:1px;top:351px;width:28px;height:1px;background:#dadada;"></div>
<div class="a" style="left:7.51px;top:333.65px;font-size:14px;line-height:18px;color:#444;">17</div>
<div class="a" style="left:1px;top:379px;width:28px;height:1px;background:#dadada;"></div>
<div class="a" style="left:7.51px;top:361.85px;font-size:14px;line-height:18px;color:#444;">18</div>
<div class="a" style="left:1px;top:396px;width:28px;height:1px;background:#dadada;"></div>
<div class="a" style="left:7.51px;top:377.15px;font-size:14px;line-height:18px;color:#444;">19</div>
<div class="a" style="left:1px;top:424px;width:28px;height:1px;background:#dadada;"></div>
<div class="a" style="left:7.51px;top:406.45px;font-size:14px;line-height:18px;color:#444;">20</div>
<div class="a" style="left:1px;top:451px;width:28px;height:1px;background:#dadada;"></div>
<div class="a" style="left:7.51px;top:434.25px;font-size:14px;line-height:18px;color:#444;">21</div>
<div class="a" style="left:1px;top:479px;width:28px;height:1px;background:#dadada;"></div>
<div class="a" style="left:7.51px;top:462.15px;font-size:14px;line-height:18px;color:#444;">22</div>
<div class="a" style="left:1px;top:507px;width:28px;height:1px;background:#dadada;"></div>
<div class="a" style="left:7.51px;top:489.95px;font-size:14px;line-height:18px;color:#444;">23</div>
<div class="a" style="left:1px;top:535px;width:28px;height:1px;background:#dadada;"></div>
<div class="a" style="left:7.51px;top:517.85px;font-size:14px;line-height:18px;color:#444;">24</div>
<div class="a" style="left:1px;top:563px;width:28px;height:1px;background:#dadada;"></div>
<div class="a" style="left:7.51px;top:545.85px;font-size:14px;line-height:18px;color:#444;">25</div>
<div class="a" style="left:1px;top:591px;width:28px;height:1px;background:#dadada;"></div>
<div class="a" style="left:7.51px;top:573.75px;font-size:14px;line-height:18px;color:#444;">26</div>
<div class="a" style="left:1px;top:619px;width:28px;height:1px;background:#dadada;"></div>
<div class="a" style="left:7.51px;top:601.65px;font-size:14px;line-height:18px;color:#444;">27</div>
<div class="a" style="left:1px;top:647px;width:28px;height:1px;background:#dadada;"></div>
<div class="a" style="left:7.51px;top:629.75px;font-size:14px;line-height:18px;color:#444;">28</div>
<div class="a" style="left:1px;top:675px;width:28px;height:1px;background:#dadada;"></div>
<div class="a" style="left:7.51px;top:657.65px;font-size:14px;line-height:18px;color:#444;">29</div>
<div class="a" style="left:7.51px;top:685.65px;font-size:14px;line-height:18px;color:#444;">30</div>
<!-- chart 1 -->
<div class="a" style="left:43px;top:212px;width:1px;height:184px;background:#b3c6dc;"></div>
<div class="a" style="left:713px;top:212px;width:1px;height:184px;background:#b3c6dc;"></div>
<div class="a" style="left:43px;top:395px;width:671px;height:1px;background:#b3c6dc;"></div>
<div class="a" style="left:220px;top:212px;width:1px;height:175px;background:#d9d9d9;"></div>
<div class="a" style="left:295px;top:212px;width:1px;height:175px;background:#d9d9d9;"></div>
<div class="a" style="left:370px;top:212px;width:1px;height:175px;background:#d9d9d9;"></div>
<div class="a" style="left:445px;top:212px;width:1px;height:175px;background:#d9d9d9;"></div>
<div class="a" style="left:520px;top:212px;width:1px;height:175px;background:#d9d9d9;"></div>
<div class="a" style="left:595px;top:212px;width:1px;height:175px;background:#d9d9d9;"></div>
<div class="a" style="left:670px;top:212px;width:1px;height:175px;background:#d9d9d9;"></div>
<div class="a" style="left:220px;top:217.9px;width:188px;height:7px;background:#8db4e2;"></div>
<div class="a" style="left:220px;top:224.8px;width:240px;height:7.9px;background:#1f497d;"></div>
<div class="a" style="left:74.24px;top:217.89px;font-size:10.7px;line-height:14px;color:#444;">Акции и другие инвестиции</div>
<div class="a" style="left:220px;top:239.3px;width:81px;height:7.8px;background:#8db4e2;"></div>
<div class="a" style="left:220px;top:247px;width:194px;height:7.4px;background:#1f497d;"></div>
<div class="a" style="left:83.26px;top:239.29px;font-size:10.7px;line-height:14px;color:#444;">За вычетом накопленной…</div>
<div class="a" style="left:220px;top:260.9px;width:150px;height:7.8px;background:#8db4e2;"></div>
<div class="a" style="left:220px;top:268.6px;width:255px;height:7.4px;background:#1f497d;"></div>
<div class="a" style="left:158.98px;top:260.89px;font-size:10.7px;line-height:14px;color:#444;">Наличные</div>
<div class="a" style="left:220px;top:281.9px;width:225px;height:7.8px;background:#8db4e2;"></div>
<div class="a" style="left:220px;top:289.6px;width:383px;height:7.4px;background:#1f497d;"></div>
<div class="a" style="left:150.58px;top:281.89px;font-size:10.7px;line-height:14px;color:#444;">Инвестиции</div>
<div class="a" style="left:220px;top:303.2px;width:97px;height:7.8px;background:#8db4e2;"></div>
<div class="a" style="left:220px;top:310.9px;width:188px;height:7.4px;background:#1f497d;"></div>
<div class="a" style="left:172.80px;top:303.19px;font-size:10.7px;line-height:14px;color:#444;">Запасы</div>
<div class="a" style="left:220px;top:324.8px;width:22px;height:7.8px;background:#8db4e2;"></div>
<div class="a" style="left:220px;top:332.5px;width:34px;height:7.4px;background:#1f497d;"></div>
<div class="a" style="left:67.39px;top:324.79px;font-size:10.7px;line-height:14px;color:#444;">Дебиторская задолженность</div>
<div class="a" style="left:220px;top:346.4px;width:184px;height:7.8px;background:#8db4e2;"></div>
<div class="a" style="left:220px;top:354.1px;width:142px;height:7.4px;background:#1f497d;"></div>
<div class="a" style="left:77.24px;top:346.39px;font-size:10.7px;line-height:14px;color:#444;">Авансированные средства</div>
<!-- chart 2 -->
<div class="a" style="left:43px;top:423px;width:1px;height:279px;background:#b3c6dc;"></div>
<div class="a" style="left:713px;top:423px;width:1px;height:279px;background:#b3c6dc;"></div>
<div class="a" style="left:43px;top:423px;width:671px;height:1px;background:#b3c6dc;"></div>
<div class="a" style="left:200px;top:477px;width:1px;height:225px;background:#d9d9d9;"></div>
<div class="a" style="left:279px;top:477px;width:1px;height:225px;background:#d9d9d9;"></div>
<div class="a" style="left:358px;top:477px;width:1px;height:225px;background:#d9d9d9;"></div>
<div class="a" style="left:437px;top:477px;width:1px;height:225px;background:#d9d9d9;"></div>
<div class="a" style="left:516px;top:477px;width:1px;height:225px;background:#d9d9d9;"></div>
<div class="a" style="left:595px;top:477px;width:1px;height:225px;background:#d9d9d9;"></div>
<div class="a" style="left:674px;top:477px;width:1px;height:225px;background:#d9d9d9;"></div>
<div class="a" style="left:117.34px;top:434.08px;font-size:12.2px;line-height:16px;color:#1f2f4f;font-weight:bold;font-family:'Liberation Serif',serif;transform:scaleX(1.1766);transform-origin:100% 50%;">Обязательства и собственный капитал ответственного</div>
<div class="a" style="left:253.47px;top:456.78px;font-size:11.3px;line-height:15px;color:#444;letter-spacing:-0.260px;">1 000,00 ₽</div>
<div class="a" style="left:332.47px;top:456.78px;font-size:11.3px;line-height:15px;color:#444;letter-spacing:-0.260px;">2 000,00 ₽</div>
<div class="a" style="left:411.47px;top:456.78px;font-size:11.3px;line-height:15px;color:#444;letter-spacing:-0.260px;">3 000,00 ₽</div>
<div class="a" style="left:490.37px;top:456.78px;font-size:11.3px;line-height:15px;color:#444;letter-spacing:-0.260px;">4 000,00 ₽</div>
<div class="a" style="left:569.27px;top:456.78px;font-size:11.3px;line-height:15px;color:#444;letter-spacing:-0.260px;">5 000,00 ₽</div>
<div class="a" style="left:648.17px;top:456.78px;font-size:11.3px;line-height:15px;color:#444;letter-spacing:-0.260px;">6 000,00 ₽</div>
<div class="a" style="left:564px;top:435.8px;width:6px;height:6px;background:#8db4e2;"></div>
<div class="a" style="left:572.50px;top:430.64px;font-size:12px;line-height:16px;color:#444;letter-spacing:-0.007px;">2022 год</div>
<div class="a" style="left:639px;top:435.8px;width:6px;height:6px;background:#1f497d;"></div>
<div class="a" style="left:648.00px;top:430.64px;font-size:12px;line-height:16px;color:#444;letter-spacing:0.056px;">2023 год</div>
<div class="a" style="left:200.5px;top:482.3px;width:434.5px;height:7.8px;background:#8db4e2;"></div>
<div class="a" style="left:200.5px;top:489.9px;width:197.5px;height:8.4px;background:#1f497d;"></div>
<div class="a" style="left:200.5px;top:515px;width:50.2px;height:8.4px;background:#1f497d;"></div>
<div class="a" style="left:61.21px;top:501.99px;font-size:10.7px;line-height:14px;color:#444;">Собственный капитал и</div>
<div class="a" style="left:50.20px;top:513.69px;font-size:10.7px;line-height:14px;color:#444;">нераспределенная прибыль</div>
<div class="a" style="left:200.5px;top:532.6px;width:118.2px;height:7.8px;background:#8db4e2;"></div>
<div class="a" style="left:200.5px;top:540.2px;width:149.2px;height:8.4px;background:#1f497d;"></div>
<div class="a" style="left:80.47px;top:527.19px;font-size:10.7px;line-height:14px;color:#444;">Ипотека, подлежащая</div>
<div class="a" style="left:107.68px;top:538.89px;font-size:10.7px;line-height:14px;color:#444;">погашению</div>
<div class="a" style="left:200.5px;top:557.5px;width:13.3px;height:7.8px;background:#8db4e2;"></div>
<div class="a" style="left:200.5px;top:565.1px;width:19.5px;height:8.4px;background:#1f497d;"></div>
<div class="a" style="left:118.41px;top:552.09px;font-size:10.7px;line-height:14px;color:#444;">Кредиторская</div>
<div class="a" style="left:114.94px;top:563.79px;font-size:10.7px;line-height:14px;color:#444;">задолженность</div>
<div class="a" style="left:200.5px;top:583.2px;width:19.5px;height:7.8px;background:#8db4e2;"></div>
<div class="a" style="left:200.5px;top:590.8px;width:28.2px;height:8.4px;background:#1f497d;"></div>
<div class="a" style="left:64.47px;top:577.79px;font-size:10.7px;line-height:14px;color:#444;">Начисленная заработная</div>
<div class="a" style="left:113.34px;top:589.49px;font-size:10.7px;line-height:14px;color:#444;">плата</div>
<div class="a" style="left:200.5px;top:608.3px;width:18.4px;height:7.8px;background:#8db4e2;"></div>
<div class="a" style="left:200.5px;top:615.9px;width:14.4px;height:8.4px;background:#1f497d;"></div>
<div class="a" style="left:98.66px;top:602.89px;font-size:10.7px;line-height:14px;color:#444;">Задолженность по</div>
<div class="a" style="left:100.28px;top:614.59px;font-size:10.7px;line-height:14px;color:#444;">заработной плате</div>
<div class="a" style="left:200.5px;top:633.5px;width:9.4px;height:7.8px;background:#8db4e2;"></div>
<div class="a" style="left:200.5px;top:641.1px;width:9.4px;height:8.4px;background:#1f497d;"></div>
<div class="a" style="left:109.77px;top:634.49px;font-size:10.7px;line-height:14px;color:#444;">Налоги к оплате</div>
<div class="a" style="left:56.80px;top:659.79px;font-size:10.7px;line-height:14px;color:#444;">Доходы будущих периодов</div>
<div class="a" style="left:200.5px;top:684.3px;width:19.5px;height:7.8px;background:#8db4e2;"></div>
<div class="a" style="left:200.5px;top:691.9px;width:18.4px;height:8.4px;background:#1f497d;"></div>
<div class="a" style="left:156.70px;top:685.29px;font-size:10.7px;line-height:14px;color:#444;">Другое</div>
<!-- tooltip -->
<div class="a" style="left:37px;top:357px;width:213px;height:165px;background:#ffffe1;border:1px solid #767676;"></div>
<div class="a" style="left:42.40px;top:361.24px;font-size:12px;line-height:16px;color:#444;letter-spacing:-0.384px;font-weight:bold;">Балансовый отчет</div>
<div class="a" style="left:44.40px;top:375.94px;font-size:12px;line-height:16px;color:#575757;letter-spacing:-0.088px;">Введите предшествующий год в</div>
<div class="a" style="left:44.40px;top:390.34px;font-size:12px;line-height:16px;color:#575757;letter-spacing:-0.206px;">ячейке C2, а текущий — в ячейке D2.</div>
<div class="a" style="left:44.40px;top:435.74px;font-size:12px;line-height:16px;color:#575757;letter-spacing:-0.261px;">Введите активы, обязательства и</div>
<div class="a" style="left:44.40px;top:450.74px;font-size:12px;line-height:16px;color:#575757;letter-spacing:-0.072px;">собственный капитал во вкладки</div>
<div class="a" style="left:44.40px;top:465.64px;font-size:12px;line-height:16px;color:#575757;letter-spacing:-0.122px;">ниже. Сводка по сальдо и год в</div>
<div class="a" style="left:44.40px;top:480.64px;font-size:12px;line-height:16px;color:#575757;letter-spacing:-0.081px;">годовых диаграммах в этой вкладке</div>
<div class="a" style="left:44.40px;top:495.44px;font-size:12px;line-height:16px;color:#575757;letter-spacing:0.013px;">обновляются автоматически.</div>
<!-- sheet tabs -->
<div class="a" style="left:1px;top:703px;width:1438px;height:27px;background:#f5f5f5;"></div>
<div class="a" style="left:1px;top:727px;width:1438px;height:3px;background:#fbfbfb;"></div>
<div class="a" style="left:1418px;top:703px;width:21px;height:27px;background:#fff;"></div>
<div class="a" style="left:101px;top:702px;width:71px;height:25px;background:#fff;border-left:1px solid #ababab;border-right:1px solid #ababab;"></div>
<div class="a" style="left:101px;top:725px;width:71px;height:2px;background:#217346;"></div>
<svg style="left:28px;top:712px" width="4" height="7"><path d="M4 0V7L0 3.500Z" fill="#c6c6c6"/></svg>
<svg style="left:57px;top:712px" width="4" height="7"><path d="M0 0V7L4 3.500Z" fill="#c6c6c6"/></svg>
<div class="a" style="left:113.70px;top:706.35px;font-size:14px;line-height:18px;color:#217346;letter-spacing:-0.963px;font-weight:bold;">Сводка</div>
<div class="a" style="left:186.30px;top:706.35px;font-size:14px;line-height:18px;color:#444;letter-spacing:-1.025px;">Активы</div>
<div class="a" style="left:264.00px;top:706.35px;font-size:14px;line-height:18px;color:#444;letter-spacing:-0.844px;">Обязательства и собственный…</div>
<div class="a" style="left:244px;top:706px;width:1px;height:19px;background:#ababab;"></div>
<div class="a" style="left:472px;top:706px;width:1px;height:19px;background:#ababab;"></div>
<svg style="left:506px;top:708px" width="16" height="16" viewBox="0 0 16 16"><circle cx="8" cy="8" r="7.200" fill="none" stroke="#666" stroke-width="1"/><path d="M4 8H12M8 4V12" stroke="#666" stroke-width="1.600" fill="none"/></svg>
<div class="a" style="left:864px;top:711.5px;width:2px;height:2px;background:#b5b5b5;"></div>
<div class="a" style="left:864px;top:715.5px;width:2px;height:2px;background:#b5b5b5;"></div>
<div class="a" style="left:864px;top:719.5px;width:2px;height:2px;background:#b5b5b5;"></div>
<div class="a" style="left:881px;top:709px;width:537px;height:15px;background:#e9e9e9;"></div>
<div class="a" style="left:881px;top:709px;width:15px;height:15px;background:#fff;border:1px solid #ababab;"></div>
<svg style="left:886px;top:712px" width="5" height="8"><path d="M5 0V8L0 4Z" fill="#777"/></svg>
<div class="a" style="left:896px;top:709px;width:470px;height:15px;background:#fff;border:1px solid #ababab;border-left:none;"></div>
<div class="a" style="left:1403px;top:709px;width:15px;height:15px;background:#fff;border:1px solid #ababab;"></div>
<svg style="left:1409px;top:712px" width="5" height="8"><path d="M0 0V8L5 4Z" fill="#777"/></svg>
<div class="a" style="left:1418px;top:192px;width:21px;height:511px;background:#fff;"></div>
<div class="a" style="left:1421px;top:211px;width:15px;height:477px;background:#f3f3f3;"></div>
<div class="a" style="left:1421px;top:195px;width:15px;height:15px;background:#fff;border:1px solid #ababab;"></div>
<svg style="left:1425px;top:200px" width="8" height="4"><path d="M0 4H8L4 0Z" fill="#777"/></svg>
<div class="a" style="left:1421px;top:379px;width:15px;height:253px;background:#fff;border:1px solid #ababab;"></div>
<div class="a" style="left:1421px;top:688px;width:15px;height:15px;background:#fff;border:1px solid #ababab;"></div>
<svg style="left:1425px;top:694px" width="8" height="4"><path d="M0 0H8L4 4Z" fill="#777"/></svg>
<!-- status bar -->
<div class="a" style="left:1px;top:730px;width:1438px;height:22px;background:#217346;"></div>
<div class="a" style="left:8.20px;top:733.99px;font-size:11px;line-height:14px;color:#fff;letter-spacing:-0.151px;">ГОТОВО</div>
<div class="a" style="left:1135px;top:730px;width:38px;height:22px;background:#185c37;"></div>
<svg style="left:1148px;top:734px" width="13" height="13" viewBox="0 0 13 13"><path d="M0.5 0.5H12.500V12.500H0.5ZM4.500 0.5V12.500M8.500 0.5V12.500M0.5 4.500H12.500M0.5 8.500H12.500" fill="none" stroke="#fff"/></svg>
<svg style="left:1186px;top:734px" width="14" height="13" viewBox="0 0 14 13"><path d="M0.5 0.5H13.500V12.500H0.5Z" fill="none" stroke="#fff"/><path d="M3.500 2.500H10.500V10.500H3.500ZM5 4.500H9M5 6.500H9M5 8.500H9" fill="none" stroke="#fff" stroke-width=".9"/></svg>
<svg style="left:1224px;top:734px" width="14" height="13" viewBox="0 0 14 13"><path d="M0.5 0.5H13.500V12.500H0.5Z" fill="none" stroke="#fff"/><path d="M2 1H6.500V7H2ZM8 1H12V7H8Z" fill="#fff"/></svg>
<div class="a" style="left:1255px;top:740px;width:6px;height:2px;background:#fff;"></div>
<div class="a" style="left:1265px;top:740px;width:100px;height:1px;background:#e6efe9;"></div>
<div class="a" style="left:1313px;top:735px;width:4px;height:11px;background:#fff;"></div>
<div class="a" style="left:1369px;top:740px;width:8px;height:2px;background:#fff;"></div>
<div class="a" style="left:1372px;top:737px;width:2px;height:8px;background:#fff;"></div>
<div class="a" style="left:1393.80px;top:733.32px;font-size:11.5px;line-height:15px;color:#fff;letter-spacing:-0.728px;">100%</div>
</body></html>
